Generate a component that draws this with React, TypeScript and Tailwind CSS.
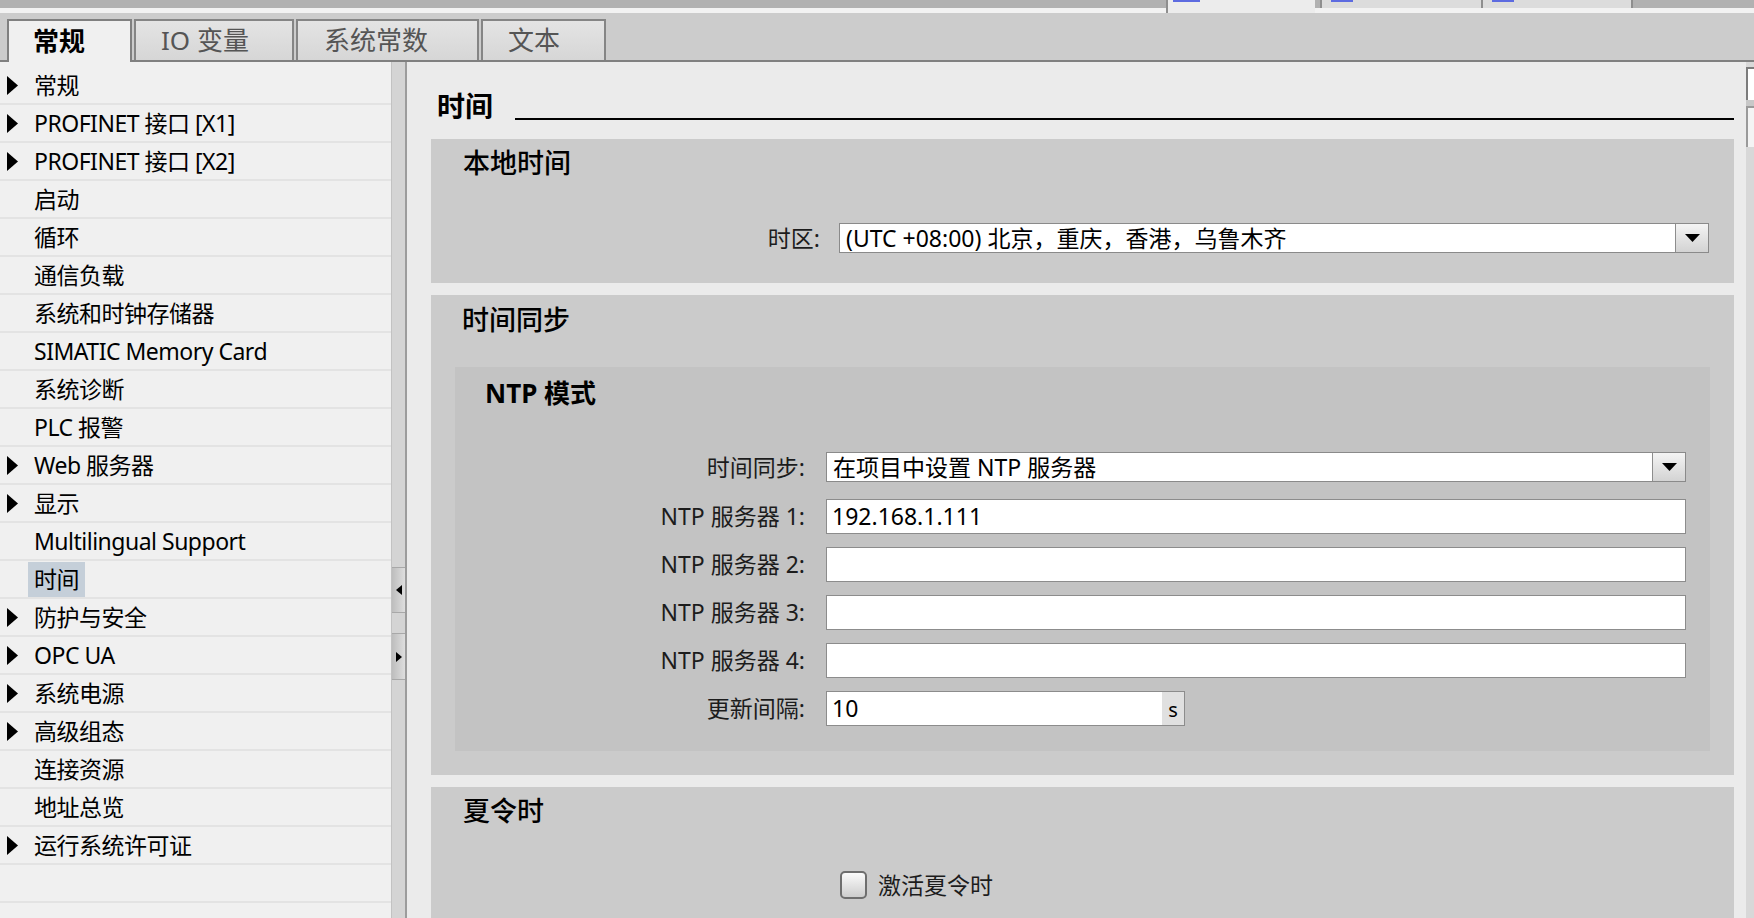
import React from 'react';

const tree: [string, boolean][] = [
  ['常规', true],
  ['PROFINET 接口 [X1]', true],
  ['PROFINET 接口 [X2]', true],
  ['启动', false],
  ['循环', false],
  ['通信负载', false],
  ['系统和时钟存储器', false],
  ['SIMATIC Memory Card', false],
  ['系统诊断', false],
  ['PLC 报警', false],
  ['Web 服务器', true],
  ['显示', true],
  ['Multilingual Support', false],
  ['时间', false],
  ['防护与安全', true],
  ['OPC UA', true],
  ['系统电源', true],
  ['高级组态', true],
  ['连接资源', false],
  ['地址总览', false],
  ['运行系统许可证', true],
  ['', false],
  ['', false],
];

function Arrow() {
  return (
    <svg width="11" height="19" viewBox="0 0 11 19">
      <polygon points="0,0 11,9.5 0,19" fill="#000" />
    </svg>
  );
}

function DropButton() {
  return (
    <div className="w-[33px] h-full border-l border-[#8d8d8d] bg-gradient-to-b from-[#f4f4f4] to-[#d3d3d3] flex items-center justify-center">
      <svg width="15" height="8" viewBox="0 0 15 8">
        <polygon points="0,0 15,0 7.5,8" fill="#000" />
      </svg>
    </div>
  );
}

function Select({ value, width }: { value: string; width: string }) {
  return (
    <div className={`${width} h-[30px] bg-white border border-[#8a8a8a] flex items-stretch`}>
      <div className="flex-1 pl-[6px] flex items-center text-[23px] leading-[28px] text-black whitespace-nowrap">{value}</div>
      <DropButton />
    </div>
  );
}

function Field({ label, children }: { label: string; children: React.ReactNode }) {
  return (
    <div className="flex items-center h-[35px]">
      <div className="w-[350px] text-right text-[23px] leading-none text-[#1c1c1c] whitespace-nowrap">{label}</div>
      <div className="ml-[21px]">{children}</div>
    </div>
  );
}

function TextBox({ value }: { value?: string }) {
  return (
    <div className="w-[860px] h-[35px] bg-white border border-[#8c8c8c] pl-[5px] flex items-center text-[23px] leading-none text-black">
      {value}
    </div>
  );
}

export default function App() {
  return (
    <div className="w-[1754px] h-[918px] overflow-hidden bg-[#ebebeb] flex flex-col font-['Noto_Sans','Noto_Sans_CJK_SC',sans-serif]">
      {/* upper editor tabs, only their bottom edge shows */}
      <div className="h-[8px] bg-[#b1b1b1] flex">
        <div className="w-[1166px]" />
        <div className="w-[149px] h-[13px] bg-[#ececec] border-l-2 border-[#8e8e8e] pl-[5px] relative z-10">
          <div className="w-[27px] h-[2px] bg-[#5d6be0]" />
        </div>
        <div className="w-[5px]" />
        <div className="w-[161px] bg-[#dcdcdc] border-l-2 border-[#8e8e8e] pl-[9px]">
          <div className="w-[22px] h-[2px] bg-[#5d6be0]" />
        </div>
        <div className="w-[152px] bg-[#dcdcdc] border-x-2 border-[#8e8e8e] pl-[9px]">
          <div className="w-[22px] h-[2px] bg-[#5d6be0]" />
        </div>
      </div>
      <div className="h-[5px] bg-[#f2f2f2]" />

      {/* property tabs */}
      <div className="h-[49px] bg-[#cccccc] border-b-2 border-[#808080] flex items-end pl-[7px] gap-[2px]">
        <div className="w-[125px] h-[43px] -mb-[2px] relative z-10 bg-[#f0f0f0] border-2 border-b-0 border-[#808080] pl-[24px] flex items-center text-[26px] font-bold text-black">
          常规
        </div>
        <div className="w-[160px] h-[41px] bg-gradient-to-b from-[#e4e4e4] to-[#d6d6d6] border-2 border-b-0 border-[#858585] pl-[25px] flex items-center text-[26px] text-[#555]">
          IO 变量
        </div>
        <div className="w-[183px] h-[41px] bg-gradient-to-b from-[#e4e4e4] to-[#d6d6d6] border-2 border-b-0 border-[#858585] pl-[26px] flex items-center text-[26px] text-[#555]">
          系统常数
        </div>
        <div className="w-[125px] h-[41px] bg-gradient-to-b from-[#e4e4e4] to-[#d6d6d6] border-2 border-b-0 border-[#858585] pl-[25px] flex items-center text-[26px] text-[#555]">
          文本
        </div>
      </div>

      <div className="flex flex-1 min-h-0">
        {/* navigation tree */}
        <div className="w-[391px] bg-[#f0f0f0] pt-[5px] overflow-hidden">
          {tree.map(([label, arrow], i) => (
            <div key={i} className="h-[38px] border-b-2 border-[#e3e3e3] flex items-center text-[23px] leading-none tracking-[-0.5px] text-black">
              <div className="w-[34px] pl-[7px] flex items-center">{arrow && <Arrow />}</div>
              {label === '时间' ? (
                <div className="-ml-[6px] px-[6px] h-[35px] bg-[#c5cfd9] flex items-center">{label}</div>
              ) : (
                <span className="whitespace-nowrap">{label}</span>
              )}
            </div>
          ))}
        </div>

        {/* splitter */}
        <div className="w-[16px] bg-[#d4d4d4] border-l border-[#c2c2c2] border-r-2 border-r-[#9c9c9c] pt-[505px] flex flex-col">
          <div className="h-[46px] bg-gradient-to-r from-[#bdbdbd] to-[#dedede] border-y border-[#a8a8a8] flex items-center justify-center">
            <svg width="6" height="10" viewBox="0 0 6 10">
              <polygon points="6,0 0,5 6,10" fill="#000" />
            </svg>
          </div>
          <div className="h-[20px]" />
          <div className="h-[47px] bg-gradient-to-r from-[#bdbdbd] to-[#dedede] border-y border-[#a8a8a8] flex items-center justify-center">
            <svg width="6" height="10" viewBox="0 0 6 10">
              <polygon points="0,0 6,5 0,10" fill="#000" />
            </svg>
          </div>
        </div>

        {/* properties */}
        <div className="flex-1 flex min-w-0">
          <div className="flex-1 pl-[24px] pr-[12px] flex flex-col overflow-hidden">
            <div className="mt-[30px] h-[28px] pl-[6px] flex items-end">
              <div className="text-[28px] leading-[28px] font-semibold text-black">时间</div>
              <div className="flex-1 ml-[22px] h-[2px] bg-black" />
            </div>

            {/* 本地时间 */}
            <div className="mt-[19px] h-[144px] bg-[#cbcbcb] pt-[10px] shrink-0">
              <div className="pl-[32px] text-[27px] leading-[28px] font-medium text-black">本地时间</div>
              <div className="mt-[46px] flex items-center">
                <div className="w-[389px] text-right text-[23px] leading-none text-[#1c1c1c]">时区:</div>
                <div className="ml-[19px]">
                  <Select width="w-[870px]" value="(UTC +08:00) 北京，重庆，香港，乌鲁木齐" />
                </div>
              </div>
            </div>

            {/* 时间同步 */}
            <div className="mt-[12px] h-[480px] bg-[#cbcbcb] pt-[11px] shrink-0">
              <div className="pl-[31px] text-[27px] leading-[28px] font-medium text-black">时间同步</div>
              <div className="mt-[33px] mx-[24px] h-[384px] bg-[#c3c3c3] pt-[12px]">
                <div className="pl-[30px] text-[26px] leading-[28px] font-bold text-black">NTP 模式</div>
                <div className="mt-[45px] flex items-center h-[30px]">
                  <div className="w-[350px] text-right text-[23px] leading-none text-[#1c1c1c]">时间同步:</div>
                  <div className="ml-[21px]">
                    <Select width="w-[860px]" value="在项目中设置 NTP 服务器" />
                  </div>
                </div>
                <div className="mt-[17px] flex flex-col gap-[13px]">
                  <Field label="NTP 服务器 1:">
                    <TextBox value="192.168.1.111" />
                  </Field>
                  <Field label="NTP 服务器 2:">
                    <TextBox />
                  </Field>
                  <Field label="NTP 服务器 3:">
                    <TextBox />
                  </Field>
                  <Field label="NTP 服务器 4:">
                    <TextBox />
                  </Field>
                  <Field label="更新间隔:">
                    <div className="w-[359px] h-[35px] bg-white border border-[#8c8c8c] flex items-stretch">
                      <div className="flex-1 pl-[5px] flex items-center text-[23px] leading-none text-black">10</div>
                      <div className="w-[22px] bg-[#e0e0e0] flex items-end justify-center pb-[5px] text-[20px] leading-none text-black">s</div>
                    </div>
                  </Field>
                </div>
              </div>
            </div>

            {/* 夏令时 */}
            <div className="mt-[12px] flex-1 bg-[#cbcbcb] pt-[10px]">
              <div className="pl-[32px] text-[27px] leading-[28px] font-medium text-black">夏令时</div>
              <div className="mt-[46px] pl-[409px] flex items-center">
                <div className="w-[27px] h-[28px] rounded-[5px] border-2 border-[#6e6e6e] bg-gradient-to-b from-[#fbfbfb] to-[#cdcdcd]" />
                <div className="ml-[11px] text-[23px] leading-none text-[#1c1c1c]">激活夏令时</div>
              </div>
            </div>
          </div>

          {/* vertical scrollbar, cut at the window edge */}
          <div className="w-[8px] bg-[#d8d8d8] pt-[5px] flex flex-col">
            <div className="h-[33px] bg-white border-l-2 border-t-2 border-[#7c7c7c]" />
            <div className="h-[6px] bg-[#c8c8c8]" />
            <div className="h-[41px] bg-[#f4f4f4] border-l-2 border-t-2 border-[#9a9a9a]" />
          </div>
        </div>
      </div>
    </div>
  );
}
